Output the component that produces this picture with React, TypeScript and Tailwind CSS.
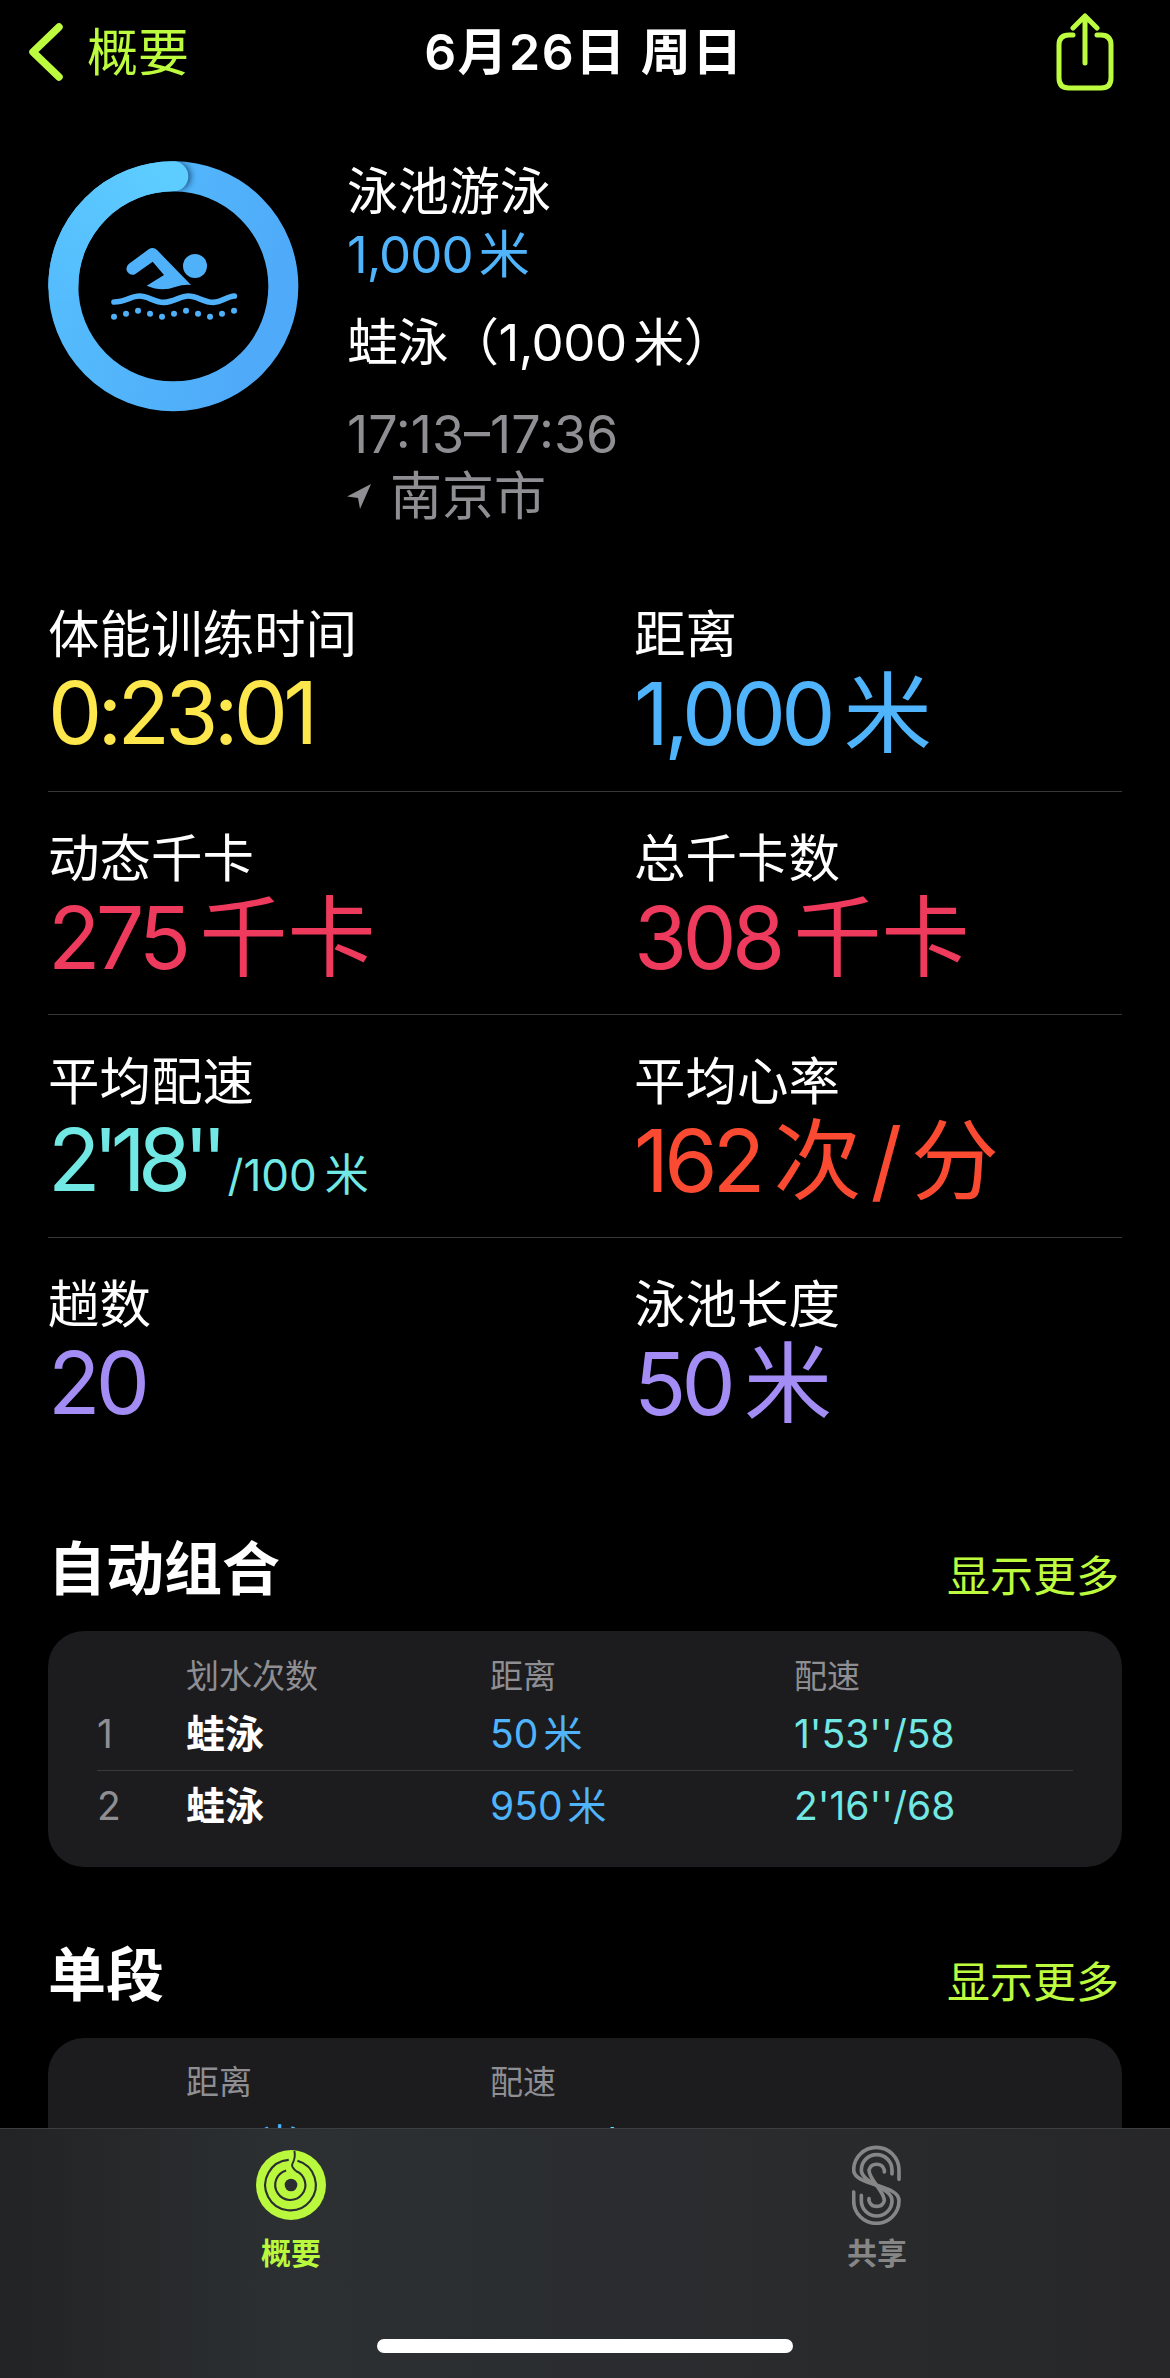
import React from "react";

const stats = [
  [
    { label: "体能训练时间", num: "0:23:01", color: "text-[#fde74c]" },
    { label: "距离", num: "1,000", unit: "米", color: "text-[#4fb4fb]" },
  ],
  [
    { label: "动态千卡", num: "275", unit: "千卡", color: "text-[#ee3a5c]" },
    { label: "总千卡数", num: "308", unit: "千卡", color: "text-[#ee3a5c]" },
  ],
  [
    { label: "平均配速", num: "2'18''", small: "/100 米", color: "text-[#72e8e4]" },
    { label: "平均心率", num: "162", unit: "次 / 分", color: "text-[#fa4b32]" },
  ],
  [
    { label: "趟数", num: "20", color: "text-[#a48cf5]" },
    { label: "泳池长度", num: "50", unit: "米", color: "text-[#a48cf5]" },
  ],
];

const splits = [
  { n: "1", stroke: "蛙泳", dist: "50 米", pace: "1'53''/58" },
  { n: "2", stroke: "蛙泳", dist: "950 米", pace: "2'16''/68" },
];

function WorkoutRing() {
  const dots = [
    [282, 530], [318, 521], [354, 512], [390, 521], [426, 530], [462, 521],
    [498, 512], [534, 521], [570, 530], [606, 521], [642, 512],
  ];
  return (
    <svg viewBox="0 0 900 870" className="w-[300px] h-[290px] shrink-0">
      <defs>
        <linearGradient id="ring" x1="0" y1="0" x2="1" y2="0.35">
          <stop offset="0" stopColor="#56bffd" />
          <stop offset="1" stopColor="#4fabf9" />
        </linearGradient>
        <linearGradient id="head" x1="0" y1="1" x2="1" y2="0">
          <stop offset="0" stopColor="#55bdfd" />
          <stop offset="1" stopColor="#5dcdff" />
        </linearGradient>
        <filter id="blur" x="-50%" y="-50%" width="200%" height="200%">
          <feGaussianBlur stdDeviation="9" />
        </filter>
        <clipPath id="ringclip">
          <path clipRule="evenodd" d="M85 439a375 375 0 1 0 750 0a375 375 0 1 0 -750 0ZM175 439a285 285 0 1 1 570 0a285 285 0 1 1 -570 0Z" />
        </clipPath>
      </defs>
      <circle cx="460" cy="439" r="330" fill="none" stroke="url(#ring)" strokeWidth="90" />
      <g clipPath="url(#ringclip)">
        <circle cx="470" cy="109" r="42" fill="#1d4f80" filter="url(#blur)" />
      </g>
      <path d="M130 439A330 330 0 0 1 460 109" fill="none" stroke="url(#head)" strokeWidth="90" strokeLinecap="round" />
      <g fill="#50b1fb">
        <circle cx="525" cy="378" r="36" />
        <path d="M326 372L386 328Q400 319 412 331L513 435Q490 433 465 441Q425 456 380 437L432 405L398 365L346 402Q334 409 323 397Q314 384 326 372Z" />
        {dots.map(([cx, cy]) => (
          <circle key={cx} cx={cx} cy={cy} r="9" />
        ))}
      </g>
      <path
        d="M282 486C315 486 335 468 358 468C385 468 402 487 432 487C462 487 480 468 505 468C532 468 550 487 580 487C606 487 620 469 643 468"
        fill="none"
        stroke="#50b1fb"
        strokeWidth="17"
        strokeLinecap="round"
      />
    </svg>
  );
}

export default function App() {
  return (
    <div className="w-[1170px] h-[2378px] bg-black text-white overflow-hidden flex flex-col font-['Inter','Noto_Sans_CJK_SC',sans-serif]">
      <div className="flex-1 min-h-0 overflow-hidden">
        <header className="h-[104px] grid grid-cols-[1fr_auto_1fr] items-center text-[#bdfb3e]">
          <div className="flex items-center pl-[28px]">
            <svg viewBox="0 0 38 60" className="w-[38px] h-[60px]">
              <path d="M31 5L5 30L31 55" fill="none" stroke="currentColor" strokeWidth="7.5" strokeLinecap="round" strokeLinejoin="round" />
            </svg>
            <span className="ml-[21px] text-[51px] leading-none">概要</span>
          </div>
          <h1 className="text-[50px] leading-none font-semibold text-white tracking-[1.5px] pr-[2px]">6月26日 周日</h1>
          <div className="flex justify-end pr-[56px]">
            <svg viewBox="0 0 60 78" className="w-[60px] h-[78px]">
              <path d="M19 22H15Q5 22 5 32V65Q5 75 15 75H47Q57 75 57 65V32Q57 22 47 22H43" fill="none" stroke="currentColor" strokeWidth="5" strokeLinecap="round" />
              <path d="M31 50V3M19 15L31 3L43 15" fill="none" stroke="currentColor" strokeWidth="5" strokeLinecap="round" strokeLinejoin="round" />
            </svg>
          </div>
        </header>

        <section className="h-[464px] flex items-start pl-[20px] pt-[36px]">
          <WorkoutRing />
          <div className="ml-[27px] pt-[22px] text-[51px] leading-[60px]">
            <div>泳池游泳</div>
            <div className="mt-[3px] text-[#4fb4fb] tracking-[-0.02em] [word-spacing:-0.14em]">1,000 米</div>
            <div className="mt-[28px] tracking-[-0.01em] [word-spacing:-0.14em]">蛙泳（1,000 米）</div>
            <div className="mt-[32px] text-[52px] text-[#8e8e93]">17:13–17:36</div>
            <div className="mt-[2px] flex items-center text-[52px] text-[#8e8e93]">
              <svg viewBox="0 0 24 26" className="w-[24px] h-[26px] mr-[19px]">
                <path d="M24 0L0 12.5L11 14L13 25Z" fill="currentColor" />
              </svg>
              南京市
            </div>
          </div>
        </section>

        <section className="mx-[48px]">
          {stats.map((row, i) => (
            <div key={i} className={`grid grid-cols-[586px_1fr] h-[223px] pt-[41px] ${i > 0 ? "border-t border-[#38383a]" : ""}`}>
              {row.map((s) => (
                <div key={s.label}>
                  <div className="text-[51.5px] leading-[50px]">{s.label}</div>
                  <div className={`mt-[4px] text-[86px] leading-[100px] whitespace-nowrap ${s.color}`}>
                    <span className={s.small ? "tracking-[-0.09em]" : "tracking-[-0.055em]"}>{s.num}</span>
                    {s.unit && <span className="ml-[13px] text-[88px] [word-spacing:-0.18em]">{s.unit}</span>}
                    {s.small && <span className="ml-[8px] text-[44px] [word-spacing:-0.1em]">{s.small}</span>}
                  </div>
                </div>
              ))}
            </div>
          ))}
        </section>

        <section className="mx-[48px] mt-[77px]">
          <div className="flex justify-between items-end h-[64px]">
            <h2 className="text-[58px] leading-[64px] font-bold">自动组合</h2>
            <span className="text-[43px] leading-[50px] text-[#bdfb3e] mr-[3px]">显示更多</span>
          </div>
          <div className="mt-[30px] h-[236px] rounded-[36px] bg-[#1c1c1e] px-[49px] pt-[27px]">
            <div className="grid grid-cols-[89px_304px_304px_1fr] text-[33px] leading-[36px] text-[#8e8e93]">
              <span />
              <span>划水次数</span>
              <span>距离</span>
              <span>配速</span>
            </div>
            {splits.map((s, i) => (
              <div key={s.n} className={`grid grid-cols-[89px_304px_304px_1fr] items-center text-[39px] h-[72px] ${i > 0 ? "border-t border-[#3a3a3c]" : "mt-[4px]"}`}>
                <span className="text-[#8e8e93]">{s.n}</span>
                <span className="font-semibold">{s.stroke}</span>
                <span className="text-[#4fb4fb] [word-spacing:-0.15em]">{s.dist}</span>
                <span className="text-[#72e8e4]">{s.pace}</span>
              </div>
            ))}
          </div>
        </section>

        <section className="mx-[48px] mt-[76px]">
          <div className="flex justify-between items-end h-[64px]">
            <h2 className="text-[58px] leading-[64px] font-bold">单段</h2>
            <span className="text-[43px] leading-[50px] text-[#bdfb3e] mr-[3px]">显示更多</span>
          </div>
          <div className="mt-[31px] h-[236px] rounded-[36px] bg-[#1c1c1e] px-[49px] pt-[26px]">
            <div className="grid grid-cols-[89px_304px_1fr] text-[33px] leading-[36px] text-[#8e8e93]">
              <span />
              <span>距离</span>
              <span>配速</span>
            </div>
            <div className="grid grid-cols-[89px_304px_1fr] items-center text-[39px] h-[72px] mt-[7px]">
              <span className="text-[#8e8e93]">1</span>
              <span className="text-[#4fb4fb] pl-[4px] [word-spacing:-0.15em]">100 米</span>
              <span className="text-[#72e8e4] pl-[4px]">2'32''/83</span>
            </div>
          </div>
        </section>
      </div>

      <nav className="relative h-[250px] shrink-0 border-t border-[#3d3e40] bg-gradient-to-r from-[#222324] via-[#2c3032] via-25% to-[#272729]">
        <div className="grid grid-cols-2">
          <div className="flex flex-col items-center pt-[21px] pr-[3px] text-[#b9f83d]">
            <svg viewBox="0 0 72 72" className="w-[70px] h-[70px]">
              <circle cx="36" cy="36" r="36" fill="#b9f83d" />
              <circle cx="36" cy="36" r="6.5" fill="#2a2e30" />
              <path d="M39.5 1C41 8 39 11 37.5 14C36 17 38 19 41 21.5" fill="none" stroke="#2a2e30" strokeWidth="2" />
              <path d="M40 10.5A26 26 0 1 1 31 10.5" fill="none" stroke="#2a2e30" strokeWidth="2.2" transform="rotate(6 36 36)" />
              <path d="M41 21.5A15.5 15.5 0 1 1 31 21" fill="none" stroke="#2a2e30" strokeWidth="2.2" />
            </svg>
            <span className="mt-[15px] text-[30px] leading-[36px] font-semibold">概要</span>
          </div>
          <div className="flex flex-col items-center pt-[16px] pr-[1px] text-[#868686]">
            <svg viewBox="125 45 150 240" className="w-[50px] h-[80px]">
              <g fill="none" stroke="currentColor" strokeWidth="11" strokeLinecap="round">
                <path d="M266 148V120A68 68 0 0 0 130 120C130 168 266 162 266 212A68 68 0 0 1 130 212V186" />
                <path d="M245 132V120A46 46 0 0 0 153 120C153 160 245 172 245 212A46 46 0 0 1 153 212V196" />
                <path d="M222 126V120A24 24 0 0 0 176 120C176 150 222 182 222 212A24 24 0 0 1 176 212V206" />
              </g>
            </svg>
            <span className="mt-[10px] text-[30px] leading-[36px] font-semibold">共享</span>
          </div>
        </div>
        <div className="absolute left-[377px] bottom-[25px] w-[416px] h-[14px] rounded-full bg-white" />
      </nav>
    </div>
  );
}
